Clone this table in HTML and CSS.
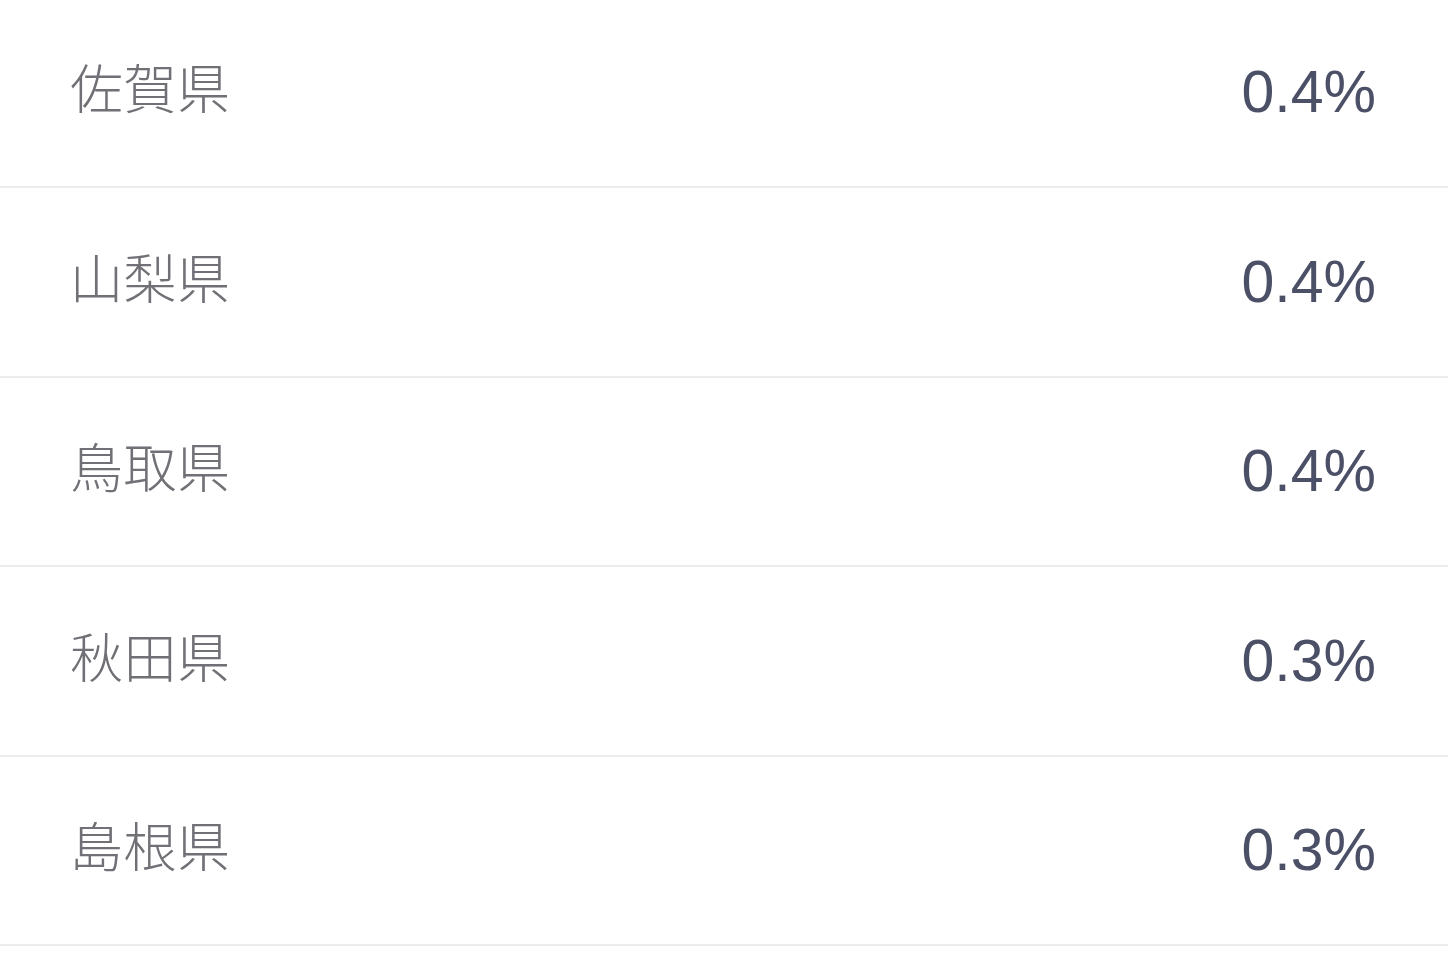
FILE: index.html
```html
<!DOCTYPE html>
<html lang="ja">
<head>
    <meta charset="UTF-8">
    <meta name="viewport" content="width=device-width, initial-scale=1.0">
    <title>都道府県別</title>
    <link rel="stylesheet" href="styles.css">
</head>
<body>
    <ul class="pref-list">
        <li class="pref-row"><span class="pref-name">佐賀県</span><span class="pref-rate">0.4%</span></li>
        <li class="pref-row"><span class="pref-name">山梨県</span><span class="pref-rate">0.4%</span></li>
        <li class="pref-row"><span class="pref-name">鳥取県</span><span class="pref-rate">0.4%</span></li>
        <li class="pref-row"><span class="pref-name">秋田県</span><span class="pref-rate">0.3%</span></li>
        <li class="pref-row"><span class="pref-name">島根県</span><span class="pref-rate">0.3%</span></li>
    </ul>
</body>
</html>
```

FILE: styles.css
```css
body {
    margin: 0;
    background-color: #ffffff;
    overflow: hidden;
}
.pref-list {
    list-style: none;
    margin: -1.5px 0 0 0;
    padding: 0;
}
.pref-row {
    display: flex;
    justify-content: space-between;
    align-items: center;
    height: 187.5px;
    padding: 0 72px 0 70px;
    border-bottom: 2px solid #ececee;
}
.pref-name {
    font-family: "Noto Sans CJK JP", sans-serif;
    font-size: 53px;
    font-weight: 300;
    color: #707076;
    letter-spacing: 0.5px;
    padding-bottom: 12px;
}
.pref-rate {
    font-family: "Liberation Sans", Arial, sans-serif;
    font-size: 59px;
    color: #4b5067;
}
```
